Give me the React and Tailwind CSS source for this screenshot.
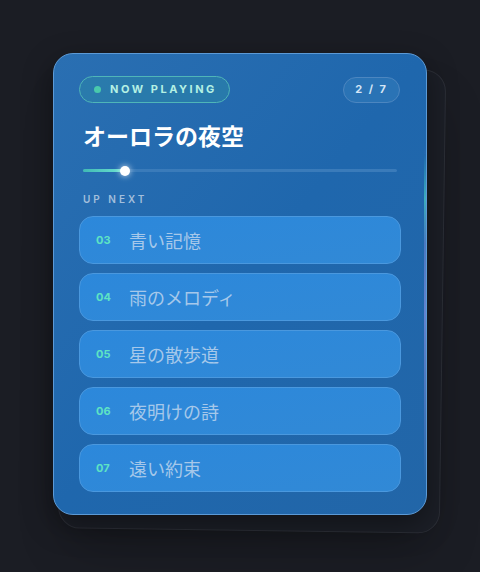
import React from "react";

const queue = [
  { no: "03", title: "青い記憶" },
  { no: "04", title: "雨のメロディ" },
  { no: "05", title: "星の散歩道" },
  { no: "06", title: "夜明けの詩" },
  { no: "07", title: "遠い約束" },
];

const jp = { fontFamily: '"Noto Sans CJK JP", "Noto Sans", sans-serif' };
const latin = { fontFamily: 'Inter, "Noto Sans", sans-serif' };

export default function App() {
  return (
    <div className="w-[480px] h-[572px] bg-[#1b1d24] pt-[53px] pl-[53px]">
      <div className="relative w-[374px] h-[462px]">
        {/* back card */}
        <div className="absolute left-[8px] top-[14px] w-[382px] h-[464px] rounded-[22px] bg-[#1c1f27] border border-[#2c2f37] rotate-[0.8deg] shadow-2xl"></div>

        {/* main card */}
        <div className="relative w-[374px] h-[462px] rounded-[20px] border border-[#5c9ad6] bg-gradient-to-br from-[#2a6fb2] via-[#1f67ad] to-[#2266a8] shadow-[0_10px_30px_rgba(0,0,0,0.4)] overflow-hidden">
          <div className="absolute right-0 top-[90px] w-[2px] h-[340px] bg-gradient-to-b from-[#1f67ad] via-[#7c8fe0] to-[#2266a8] opacity-70"></div>
          <div className="absolute right-0 top-[100px] w-[2px] h-[90px] bg-gradient-to-b from-[#1f67ad] via-[#3fc6c0] to-transparent opacity-70"></div>

          <div className="px-[25px] pt-[22px]">
            <div className="flex items-center justify-between">
              <div
                className="flex items-center gap-[9px] h-[27px] pl-[14px] pr-[12px] whitespace-nowrap rounded-full border border-[#4fb5b8] bg-[#2b84a8]/60"
                style={latin}
              >
                <span className="w-[7px] h-[7px] rounded-full bg-[#49c9ac]"></span>
                <span className="text-[11px] font-bold tracking-[0.23em] text-[#b4f1e4]">
                  NOW PLAYING
                </span>
              </div>
              <div
                className="flex items-center justify-center h-[26px] w-[57px] mr-[1px] rounded-full border border-[#4c86c0] bg-[#2a73b5] text-[11px] font-bold tracking-[0.18em] text-[#d5e6f6]"
                style={latin}
              >
                2 / 7
              </div>
            </div>

            <h1 className="mt-[17px] pl-[4px] text-[23px] font-bold text-white leading-[30px]" style={jp}>
              オーロラの夜空
            </h1>

            <div className="mt-[19px] ml-[4px] mr-[4px] relative h-[3px] rounded-full bg-[#3a7bba]">
              <div className="absolute left-0 top-0 h-[3px] w-[42px] rounded-full bg-gradient-to-r from-[#3fb9b4] to-[#6ee4d2]"></div>
              <div className="absolute left-[37px] top-[-3px] w-[10px] h-[10px] rounded-full bg-white shadow-[0_0_6px_rgba(255,255,255,0.8)]"></div>
            </div>

            <div
              className="mt-[20px] pl-[4px] text-[10px] font-semibold tracking-[0.3em] text-[#a3bfdc]"
              style={latin}
            >
              UP NEXT
            </div>

            <div className="mt-[9px] flex flex-col gap-[9px]">
              {queue.map((q) => (
                <div
                  key={q.no}
                  className="flex items-center h-[48px] rounded-[14px] border border-[#4a98de] bg-gradient-to-br from-[#2c88db] to-[#3189d6] pl-[16px]"
                >
                  <span className="w-[33px] text-[11px] font-bold text-[#5ee3c4]" style={latin}>
                    {q.no}
                  </span>
                  <span className="text-[18px] text-[#a6c8ea]" style={jp}>
                    {q.title}
                  </span>
                </div>
              ))}
            </div>
          </div>
        </div>
      </div>
    </div>
  );
}
